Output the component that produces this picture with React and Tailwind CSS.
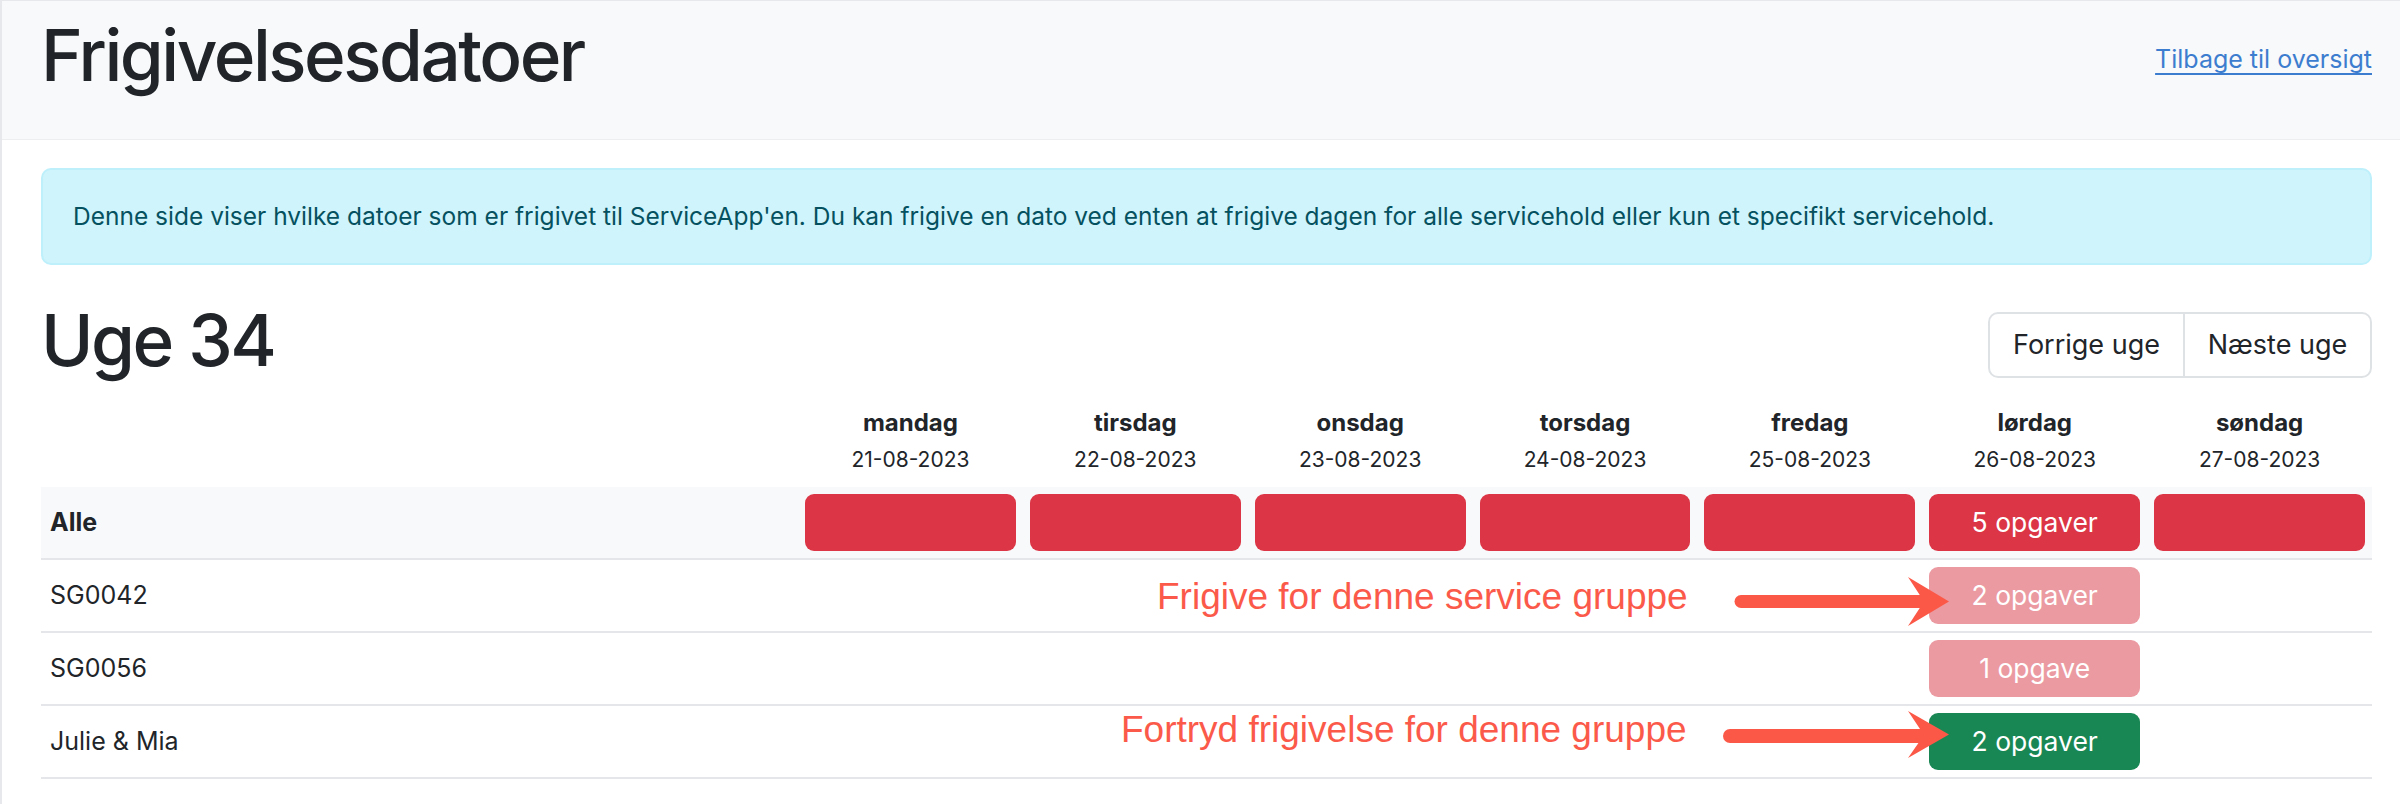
import React from "react";

const days = [
  ["mandag", "21-08-2023"],
  ["tirsdag", "22-08-2023"],
  ["onsdag", "23-08-2023"],
  ["torsdag", "24-08-2023"],
  ["fredag", "25-08-2023"],
  ["lørdag", "26-08-2023"],
  ["søndag", "27-08-2023"],
];

const rows = [
  { name: "Alle", bold: true, bg: true, cells: [{ k: "red" }, { k: "red" }, { k: "red" }, { k: "red" }, { k: "red" }, { k: "red", t: "5 opgaver" }, { k: "red" }] },
  { name: "SG0042", cells: [null, null, null, null, null, { k: "light", t: "2 opgaver" }, null] },
  { name: "SG0056", cells: [null, null, null, null, null, { k: "light", t: "1 opgave" }, null] },
  { name: "Julie & Mia", cells: [null, null, null, null, null, { k: "green", t: "2 opgaver" }, null] },
];

function Btn({ c }) {
  if (!c) return null;
  const color =
    c.k === "red" ? "bg-[#dc3545]" : c.k === "light" ? "bg-[#eb9aa2]" : "bg-[#198754]";
  return (
    <div className={`${color} h-[57px] w-full rounded-[9px] flex items-center justify-center text-white text-[26.5px] leading-none`}>
      {c.t || ""}
    </div>
  );
}

export default function App() {
  return (
    <div className="relative w-[2400px] h-[804px] overflow-hidden bg-white font-['Inter',sans-serif] text-[#212529]">
      <div className="h-full border-l-2 border-t border-[#e6e8eb]">
        {/* Header */}
        <div className="h-[139px] bg-[#f8f9fa] border-b border-[#eceef0] flex justify-between items-start pl-[39px] pr-[28px]">
          <h1 className="mt-[19px] text-[71px] leading-none font-medium tracking-[-0.035em] text-[#212529]">
            Frigivelsesdatoer
          </h1>
          <a href="#" className="mt-[43px] text-[25px] leading-[30px] text-[#3d7dcf] underline underline-offset-[5px] decoration-[2px]">
            Tilbage til oversigt
          </a>
        </div>

        <div className="pl-[39px] pr-[28px]">
          {/* Alert */}
          <div className="mt-[28px] h-[97px] rounded-[10px] border-2 border-[#bdf0fb] bg-[#cff4fc] text-[#055160] text-[24.5px] leading-none flex items-center px-[30px]">
            Denne side viser hvilke datoer som er frigivet til ServiceApp'en. Du kan frigive en dato ved enten at frigive dagen for alle servicehold eller kun et specifikt servicehold.
          </div>

          {/* Week heading */}
          <div className="mt-[40px] flex justify-between items-start">
            <h2 className="text-[71px] leading-none font-medium tracking-[-0.035em] text-[#212529]">Uge 34</h2>
            <div className="mt-[7px] flex h-[66px] rounded-[10px] border-2 border-[#dfe2e5] overflow-hidden text-[27px] text-[#212529]">
              <div className="w-[193px] flex items-center justify-center">Forrige uge</div>
              <div className="w-[187px] flex items-center justify-center border-l-2 border-[#dfe2e5]">Næste uge</div>
            </div>
          </div>

          {/* Table */}
          <div className="mt-[22px] w-[2331px]">
            <div className="grid grid-cols-[757px_repeat(7,minmax(0,1fr))] h-[87px]">
              <div />
              {days.map(([d, date]) => (
                <div key={d} className="flex flex-col items-center pt-[8px]">
                  <div className="text-[24px] font-bold leading-[30px]">{d}</div>
                  <div className="mt-[9px] text-[21px] leading-[26px]">{date}</div>
                </div>
              ))}
            </div>
            {rows.map((r) => (
              <div
                key={r.name}
                className={`grid grid-cols-[757px_repeat(7,minmax(0,1fr))] h-[73px] border-b-2 border-[#e4e6e9] items-center ${r.bg ? "bg-[#f8f9fa]" : ""}`}
              >
                <div className={`pl-[9px] text-[25px] ${r.bold ? "font-bold" : ""}`}>{r.name}</div>
                {r.cells.map((c, i) => (
                  <div key={i} className="px-[7px] flex items-center">
                    <Btn c={c} />
                  </div>
                ))}
              </div>
            ))}
          </div>
        </div>
      </div>

      {/* Annotations */}
      <div className="absolute left-[1157px] top-[578px] text-[37px] leading-none font-['Liberation_Sans',Arial,sans-serif] text-[#fb5a4a] whitespace-nowrap">
        Frigive for denne service gruppe
      </div>
      <div className="absolute left-[1121px] top-[711px] text-[37px] leading-none font-['Liberation_Sans',Arial,sans-serif] text-[#fb5a4a] whitespace-nowrap">
        Fortryd frigivelse for denne gruppe
      </div>
      <svg className="absolute left-[1700px] top-[560px]" width="260" height="210" viewBox="0 0 260 210">
        <line x1="41" y1="41.5" x2="224" y2="41.5" stroke="#fc5847" strokeWidth="13" strokeLinecap="round" />
        <polygon points="208,17 249,41.5 208,66 224,41.5" fill="#fc5847" />
        <line x1="30" y1="176" x2="224" y2="176" stroke="#fc5847" strokeWidth="14" strokeLinecap="round" />
        <polygon points="208,151 249,174.5 208,198 224,175" fill="#fc5847" />
      </svg>
    </div>
  );
}
